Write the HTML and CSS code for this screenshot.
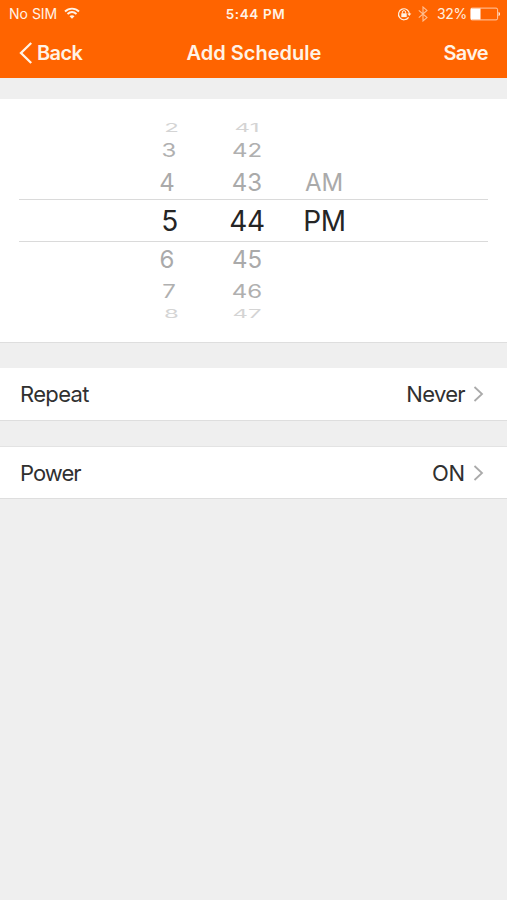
FILE: index.html
```html
<!DOCTYPE html>
<html lang="en">
<head>
<meta charset="utf-8">
<title>Add Schedule</title>
<link rel="stylesheet" href="styles.css">
</head>
<body>
<header class="header">
  <div class="status">
    <div class="status-left">
      <span class="carrier">No SIM</span>
      <svg class="wifi" width="16" height="12" viewBox="0 0 16 12" fill="none" stroke="currentColor" stroke-width="1.9"><path d="M1 4.5C5 .6 11 .6 15 4.5M3.5 7c2.7-2.4 6.3-2.4 9 0"/><path d="M5.500 9.300C7 8 9 8 10.500 9.300L8 11.800z" fill="currentColor" stroke="none"/></svg>
    </div>
    <span class="clock">5:44 PM</span>
    <div class="status-right">
      <svg class="lock" width="15" height="14" viewBox="0 0 15 14" fill="none" stroke="currentColor"><path d="M11.600 10.300A5.500 5.500 0 1 1 12.500 7" stroke-width="1.200"/><path d="M10.300 6.400h4l-2 2.600z" fill="currentColor" stroke="none"/><path d="M4.300 6.300h5.400v3.800H4.300z" fill="currentColor" stroke="none"/><path d="M5.400 6.500V5.200a1.600 1.600 0 0 1 3.200 0v1.300"/></svg>
      <svg class="bluetooth" width="10" height="16" viewBox="0 0 10 16" fill="none" stroke="currentColor" stroke-width="1.100"><path d="M.8 4.400 9 11.600 5 15V1l4 3.400L.8 11.600"/></svg>
      <span class="percent">32%</span>
      <svg class="battery" width="31" height="14" viewBox="0 0 31 14"><rect x=".6" y="1.100" width="27" height="11.800" rx="1.500" fill="none" stroke="currentColor" stroke-opacity=".65"/><rect x="1" y="1.500" width="9.500" height="11" fill="currentColor"/><path d="M28.600 4.800c1.800.7 1.800 3.700 0 4.400z" fill="currentColor"/></svg>
    </div>
  </div>
  <nav class="nav">
    <a class="back"><svg width="14" height="22" viewBox="0 0 14 22" fill="none" stroke="currentColor" stroke-width="2.300"><path d="M12.200 1 2 11l10.200 10"/></svg><span>Back</span></a>
    <h1 class="title">Add Schedule</h1>
    <a class="save">Save</a>
  </nav>
</header>
<main>
  <section class="picker">
    <div class="row far top"><span class="hour">2</span><span class="minute">41</span></div>
    <div class="row mid above"><span class="hour">3</span><span class="minute">42</span></div>
    <div class="row near before"><span class="hour">4</span><span class="minute">43</span><span class="period">AM</span></div>
    <div class="row selected"><span class="hour">5</span><span class="minute">44</span><span class="period">PM</span></div>
    <div class="row near after"><span class="hour">6</span><span class="minute">45</span></div>
    <div class="row mid below"><span class="hour">7</span><span class="minute">46</span></div>
    <div class="row far bottom"><span class="hour">8</span><span class="minute">47</span></div>
  </section>
  <section class="option repeat">
    <span class="label">Repeat</span><span class="value">Never</span>
    <svg class="chevron" width="11" height="16" viewBox="0 0 11 16"><path d="m1.500 1 7.500 7-7.500 7"/></svg>
  </section>
  <section class="option power">
    <span class="label">Power</span><span class="value">ON</span>
    <svg class="chevron" width="11" height="16" viewBox="0 0 11 16"><path d="m1.500 1 7.500 7-7.500 7"/></svg>
  </section>
</main>
</body>
</html>
```
FILE: styles.css
```css
* { box-sizing: border-box; }
body { margin: 0; min-height: 900px; background: #efefef; color: #303030; font-family: Inter, "Liberation Sans", sans-serif; }
svg { display: block; flex: none; }
.header { height: 78px; background: #ff6400; color: #fff3e6; }
.status { display: grid; grid-template-columns: 1fr auto 1fr; align-items: center; height: 28px; padding: 0 6px 0 9px; font-size: 14px; line-height: 20px; }
.status-left, .status-right { display: flex; align-items: center; }
.status-right { justify-content: flex-end; color: #fff0e0; }
.wifi { margin: -2px 0 0 7px; }
.clock { padding-left: 1px; font-weight: 600; font-size: 13.500px; letter-spacing: .6px; }
.bluetooth { margin: 0 9px 0 6px; opacity: .65; }
.percent { letter-spacing: -.3px; }
.battery { margin-left: 3px; color: #fff; }
.nav { display: grid; grid-template-columns: 1fr auto 1fr; align-items: center; height: 50px; padding: 0 19px; font-size: 20px; font-weight: 600; line-height: 26px; }
.back { display: flex; align-items: center; gap: 4px; letter-spacing: -.6px; }
.title { margin: 0; padding-left: 1px; font-size: inherit; font-weight: inherit; }
.save { text-align: right; letter-spacing: -.7px; }
.picker { margin-top: 21px; height: 244px; padding-top: 20px; background: #fff; border-bottom: 1px solid #dedede; }
.row { display: grid; grid-template-columns: 50px 106px 48px; justify-content: start; align-items: center; margin: 0 19px; padding-left: 125px; color: #aaa; font-size: 24px; text-align: center; }
.row span { transform: translateY(1px); }
.row.far { height: 17px; line-height: 17px; color: #d4d4d4; }
.row.far span { transform: translateY(1px) scaleY(.46); }
.far .hour { padding-left: 5px; }
.row.mid { height: 27px; line-height: 27px; color: #b0b0b0; }
.row.mid span { transform: translateY(1px) scaleY(.77); }
.near { height: 36px; line-height: 36px; }
.before { padding-top: 1px; }
.near .hour { padding-right: 4px; }
.after { height: 34px; line-height: 34px; }
.row.below { height: 30px; line-height: 30px; }
.row.bottom { height: 14px; line-height: 14px; }
.selected { height: 43px; line-height: 41px; border-top: 1px solid #dadada; border-bottom: 1px solid #dadada; color: #252525; font-size: 28px; letter-spacing: -.3px; }
.selected .hour { padding-left: 1px; }
.selected .period { padding-left: 1px; }
.option { display: flex; align-items: center; height: 53px; padding: 0 23px 0 20px; background: #fff; border-bottom: 1px solid #dedede; font-size: 22px; line-height: 30px; letter-spacing: -.65px; }
.repeat { margin-top: 25px; }
.power { margin-top: 25px; border-top: 1px solid #e3e3e3; }
.power .label { letter-spacing: -.95px; }
.power .value { letter-spacing: -.2px; }
.value { margin-left: auto; }
.chevron { margin-left: 8px; fill: none; stroke: #aaa; stroke-width: 1.800; }
```
